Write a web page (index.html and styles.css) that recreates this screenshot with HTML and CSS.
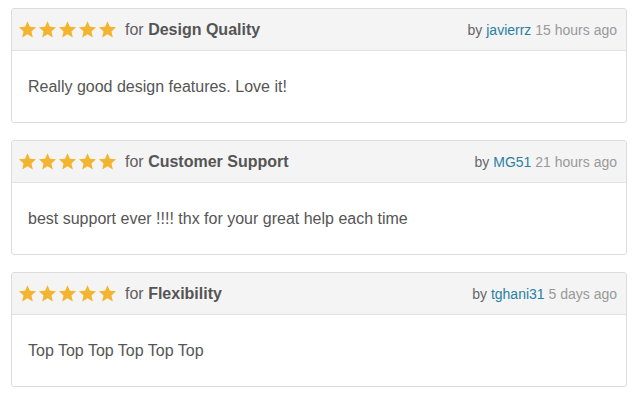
FILE: index.html
```html
<!DOCTYPE html>
<html lang="en">
<head>
<meta charset="UTF-8" />
<title>Reviews</title>
<link rel="stylesheet" href="styles.css">
</head>
<body>

<div class="review">
  <div class="review-head">
    <div class="rating">
      <svg class="star" viewBox="0 0 24 24"><polygon points="12,1.5 15.1,8.6 22.8,9.3 17,14.4 18.7,22 12,18 5.3,22 7,14.4 1.2,9.3 8.9,8.6"/></svg>
      <svg class="star" viewBox="0 0 24 24"><polygon points="12,1.5 15.1,8.6 22.8,9.3 17,14.4 18.7,22 12,18 5.3,22 7,14.4 1.2,9.3 8.9,8.6"/></svg>
      <svg class="star" viewBox="0 0 24 24"><polygon points="12,1.5 15.1,8.6 22.8,9.3 17,14.4 18.7,22 12,18 5.3,22 7,14.4 1.2,9.3 8.9,8.6"/></svg>
      <svg class="star" viewBox="0 0 24 24"><polygon points="12,1.5 15.1,8.6 22.8,9.3 17,14.4 18.7,22 12,18 5.3,22 7,14.4 1.2,9.3 8.9,8.6"/></svg>
      <svg class="star" viewBox="0 0 24 24"><polygon points="12,1.5 15.1,8.6 22.8,9.3 17,14.4 18.7,22 12,18 5.3,22 7,14.4 1.2,9.3 8.9,8.6"/></svg>
      <span class="for">for <b>Design Quality</b></span>
    </div>
    <div class="meta">by <a href="#">javierrz</a> <span class="time">15 hours ago</span></div>
  </div>
  <div class="review-body">Really good design features. Love it!</div>
</div>

<div class="review">
  <div class="review-head">
    <div class="rating">
      <svg class="star" viewBox="0 0 24 24"><polygon points="12,1.5 15.1,8.6 22.8,9.3 17,14.4 18.7,22 12,18 5.3,22 7,14.4 1.2,9.3 8.9,8.6"/></svg>
      <svg class="star" viewBox="0 0 24 24"><polygon points="12,1.5 15.1,8.6 22.8,9.3 17,14.4 18.7,22 12,18 5.3,22 7,14.4 1.2,9.3 8.9,8.6"/></svg>
      <svg class="star" viewBox="0 0 24 24"><polygon points="12,1.5 15.1,8.6 22.8,9.3 17,14.4 18.7,22 12,18 5.3,22 7,14.4 1.2,9.3 8.9,8.6"/></svg>
      <svg class="star" viewBox="0 0 24 24"><polygon points="12,1.5 15.1,8.6 22.8,9.3 17,14.4 18.7,22 12,18 5.3,22 7,14.4 1.2,9.3 8.9,8.6"/></svg>
      <svg class="star" viewBox="0 0 24 24"><polygon points="12,1.5 15.1,8.6 22.8,9.3 17,14.4 18.7,22 12,18 5.3,22 7,14.4 1.2,9.3 8.9,8.6"/></svg>
      <span class="for">for <b>Customer Support</b></span>
    </div>
    <div class="meta">by <a href="#">MG51</a> <span class="time">21 hours ago</span></div>
  </div>
  <div class="review-body">best support ever !!!! thx for your great help each time</div>
</div>

<div class="review">
  <div class="review-head">
    <div class="rating">
      <svg class="star" viewBox="0 0 24 24"><polygon points="12,1.5 15.1,8.6 22.8,9.3 17,14.4 18.7,22 12,18 5.3,22 7,14.4 1.2,9.3 8.9,8.6"/></svg>
      <svg class="star" viewBox="0 0 24 24"><polygon points="12,1.5 15.1,8.6 22.8,9.3 17,14.4 18.7,22 12,18 5.3,22 7,14.4 1.2,9.3 8.9,8.6"/></svg>
      <svg class="star" viewBox="0 0 24 24"><polygon points="12,1.5 15.1,8.6 22.8,9.3 17,14.4 18.7,22 12,18 5.3,22 7,14.4 1.2,9.3 8.9,8.6"/></svg>
      <svg class="star" viewBox="0 0 24 24"><polygon points="12,1.5 15.1,8.6 22.8,9.3 17,14.4 18.7,22 12,18 5.3,22 7,14.4 1.2,9.3 8.9,8.6"/></svg>
      <svg class="star" viewBox="0 0 24 24"><polygon points="12,1.5 15.1,8.6 22.8,9.3 17,14.4 18.7,22 12,18 5.3,22 7,14.4 1.2,9.3 8.9,8.6"/></svg>
      <span class="for">for <b>Flexibility</b></span>
    </div>
    <div class="meta">by <a href="#">tghani31</a> <span class="time">5 days ago</span></div>
  </div>
  <div class="review-body">Top Top Top Top Top Top</div>
</div>

</body>
</html>
```

FILE: styles.css
```css
body {
  margin: 8px 12px 0 11px;
  font-family: "Liberation Sans", Arial, sans-serif;
  color: #555;
  background: #fff;
}
.review {
  border: 1px solid #dcdcdc;
  border-radius: 3px;
  margin-bottom: 17px;
  overflow: hidden;
}
.review-head {
  display: flex;
  align-items: center;
  justify-content: space-between;
  height: 41px;
  padding: 0 9px 0 6px;
  background: #f4f4f4;
  border-bottom: 1px solid #e3e3e3;
}
.rating {
  display: flex;
  align-items: center;
}
.star {
  width: 19px;
  height: 19px;
  margin-right: 1px;
  fill: #f3b430;
}
.for {
  margin-left: 7px;
  font-size: 16px;
  color: #5f5f5f;
}
.for b {
  color: #555;
}
.meta {
  font-size: 14px;
  color: #666;
}
.meta a {
  color: #2a7fa3;
  text-decoration: none;
}
.time {
  color: #999;
}
.review-body {
  padding: 27px 16px 26px;
  font-size: 16px;
  line-height: 18px;
}
```
